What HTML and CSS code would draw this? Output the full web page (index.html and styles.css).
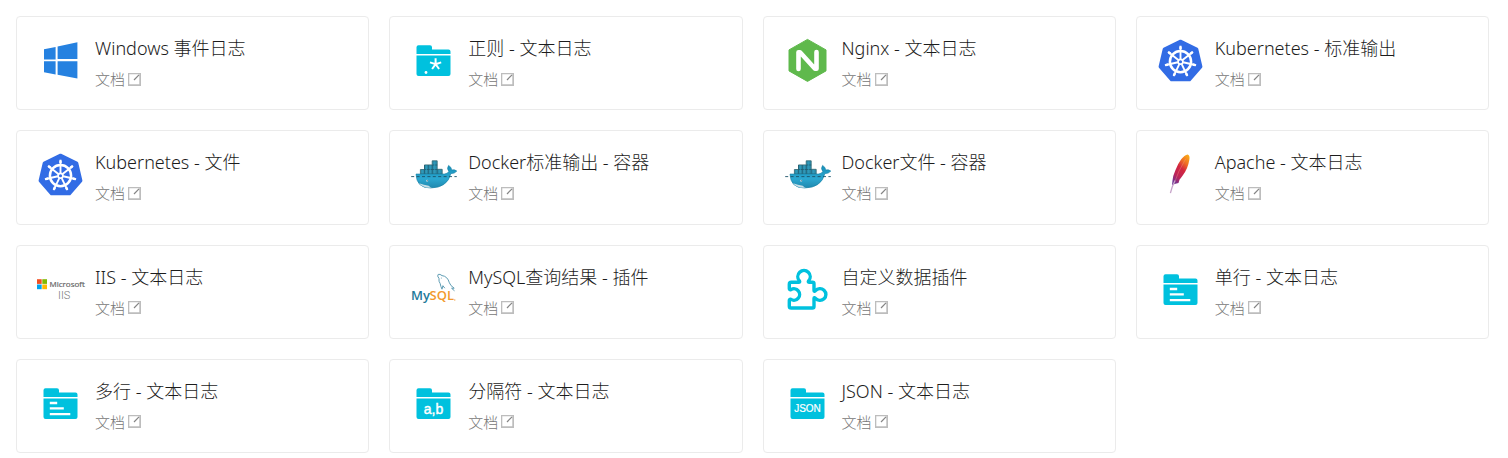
FILE: index.html
```html
<!DOCTYPE html>
<html lang="zh-CN">
<head>
<meta charset="utf-8">
<meta name="viewport" content="width=device-width, initial-scale=1">
<title>文本日志</title>
<link rel="stylesheet" href="styles.css">
</head>
<body>
<svg class="sprite" aria-hidden="true">
  <symbol id="ext" viewBox="0 0 13 13">
    <path d="M0 0H13V13H0ZM1.3 1.3V11.3H11.3V1.3Z" fill="#bdbdbd" fill-rule="evenodd"/>
    <path d="M6 7 11 1.8" fill="none" stroke="#858585" stroke-width="1.2"/>
  </symbol>
  <symbol id="folder" viewBox="0 0 48 48">
    <path fill="#00c1de" d="M6.5 17V10.3q0-2 2-2H20q2 0 2 2V12.5H38.5q2 0 2 2V17zM6.5 18.5H40.5V37q0 2-2 2H8.5q-2 0-2-2z"/>
  </symbol>
  <symbol id="folder-lines" viewBox="0 0 48 48">
    <use href="#folder"/>
    <path d="M12.8 23H20.2M12.8 28.3H26.8M12.8 34.2H33.3" stroke="#fff" stroke-width="2.3" fill="none"/>
  </symbol>
  <symbol id="k8s" viewBox="0 0 48 48">
    <path fill="#326ce5" stroke="#326ce5" stroke-width="3" stroke-linejoin="round" d="M23.5 4.2 39.8 12 43.9 29.7 32.6 42.8H14.4L3.1 29.7 7.2 12z"/>
    <g fill="none" stroke="#fff">
      <circle cx="23.5" cy="24.7" r="10.6" stroke-width="2.5"/>
      <g id="spoke" stroke-width="1.9"><path d="M23.5 22V8.7"/><path d="M23.5 12V9.5" stroke-width="2.4"/></g>
      <use href="#spoke" transform="rotate(51.43 23.5 24.7)"/>
      <use href="#spoke" transform="rotate(102.86 23.5 24.7)"/>
      <use href="#spoke" transform="rotate(154.29 23.5 24.7)"/>
      <use href="#spoke" transform="rotate(205.71 23.5 24.7)"/>
      <use href="#spoke" transform="rotate(257.14 23.5 24.7)"/>
      <use href="#spoke" transform="rotate(308.57 23.5 24.7)"/>
      <circle cx="23.5" cy="24.7" r="2.4" stroke-width="1.7"/>
    </g>
  </symbol>
  <linearGradient id="hull" x1="0" y1="0" x2="0" y2="1">
    <stop offset="0" stop-color="#178fb8"/><stop offset=".6" stop-color="#2ba7d0"/><stop offset="1" stop-color="#2088ae"/>
  </linearGradient>
  <symbol id="docker" viewBox="0 0 48 48">
    <path fill="#2a8fae" stroke="#32646f" stroke-width=".8" d="M10.4 23V18.5H14.5V13.9H22.2V9.8H27.2V18.3H32.2V23z"/>
    <path fill="none" stroke="#205c70" stroke-width=".8" d="M14.5 18.5H27M14.5 14V23M18.3 14V23M22.3 14V23M27.2 18V23M22.3 14H27.2"/>
    <path fill="none" stroke="#369fbe" stroke-width=".7" d="M12.4 19V22.5M16.4 14.5V22.5M20.3 14.5V22.5M24.7 10.5V22.5M29.7 19V22.5"/>
    <path fill="url(#hull)" stroke="#167fa4" stroke-width=".6" d="M6 23H34.4Q37.5 22.8 38.8 20.5Q36.4 17.5 38.6 14.4Q41.5 16 41.8 19Q44.4 18 46.8 20.1Q44.8 22.6 40.8 22.7Q37.5 36.8 20.5 37Q6.4 37 6 23z"/>
    <path fill="#c9dfe7" d="M9 32.2Q14 34 18.7 34.7Q20 36.2 22 36.5Q13.5 37.5 9 32.2z"/>
    <circle cx="17.2" cy="29.8" r="1" fill="#d8eff7"/><circle cx="17.3" cy="29.8" r=".5" fill="#234"/>
    <path fill="none" stroke="#1c5468" stroke-width=".9" stroke-dasharray="3 2.4" d="M1.2 25.6H46.8"/>
  </symbol>
  <linearGradient id="feather" x1=".8" y1="0" x2=".25" y2="1">
    <stop offset="0" stop-color="#f9a51a"/><stop offset=".24" stop-color="#ef6b24"/><stop offset=".46" stop-color="#d3273f"/><stop offset=".75" stop-color="#bd2458"/><stop offset="1" stop-color="#6b3395"/>
  </linearGradient>
</svg>

<main class="grid">
  <article class="card">
    <svg class="logo" viewBox="0 0 48 48" aria-hidden="true"><path fill="#2581e0" d="M7 12.2 18.6 9.9V22.4H7zM20.6 9.5 40.4 5.3V22H20.6zM7 24.3H18.6V37.4L7 35.3zM20.6 24.3H40.4V41.5L20.6 37.8z"/></svg>
    <div class="info"><h2 class="title">Windows 事件日志</h2><a class="doc" href="#">文档<svg class="ext" aria-hidden="true"><use href="#ext"/></svg></a></div>
  </article>
  <article class="card">
    <svg class="logo" viewBox="0 0 48 48" aria-hidden="true"><use href="#folder"/><path d="M25.6 21.3V27.2L20 25.4M25.6 27.2 31.2 25.4M22.1 32 25.6 27.2 29.1 32" fill="none" stroke="#fff" stroke-width="2"/><circle cx="16" cy="35.5" r="1.4" fill="#fff"/></svg>
    <div class="info"><h2 class="title">正则 - 文本日志</h2><a class="doc" href="#">文档<svg class="ext" aria-hidden="true"><use href="#ext"/></svg></a></div>
  </article>
  <article class="card">
    <svg class="logo" viewBox="0 0 48 48" aria-hidden="true"><path fill="#5fb94c" stroke="#5fb94c" stroke-linejoin="round" d="M23.5 2.4 42 12.9V33.9L23.5 44.4 5 33.9V12.9z"/><path d="M14.5 32V15.3H16L31 31.7H32.5V15" fill="none" stroke="#fff" stroke-width="4.6" stroke-linecap="round" stroke-linejoin="round"/></svg>
    <div class="info"><h2 class="title">Nginx - 文本日志</h2><a class="doc" href="#">文档<svg class="ext" aria-hidden="true"><use href="#ext"/></svg></a></div>
  </article>
  <article class="card">
    <svg class="logo" aria-hidden="true"><use href="#k8s"/></svg>
    <div class="info"><h2 class="title">Kubernetes - 标准输出</h2><a class="doc" href="#">文档<svg class="ext" aria-hidden="true"><use href="#ext"/></svg></a></div>
  </article>
  <article class="card">
    <svg class="logo" aria-hidden="true"><use href="#k8s"/></svg>
    <div class="info"><h2 class="title">Kubernetes - 文件</h2><a class="doc" href="#">文档<svg class="ext" aria-hidden="true"><use href="#ext"/></svg></a></div>
  </article>
  <article class="card">
    <svg class="logo" aria-hidden="true"><use href="#docker"/></svg>
    <div class="info"><h2 class="title">Docker标准输出 - 容器</h2><a class="doc" href="#">文档<svg class="ext" aria-hidden="true"><use href="#ext"/></svg></a></div>
  </article>
  <article class="card">
    <svg class="logo" aria-hidden="true"><use href="#docker"/></svg>
    <div class="info"><h2 class="title">Docker文件 - 容器</h2><a class="doc" href="#">文档<svg class="ext" aria-hidden="true"><use href="#ext"/></svg></a></div>
  </article>
  <article class="card">
    <svg class="logo" viewBox="0 0 48 48" aria-hidden="true"><path fill="url(#feather)" d="M30.7 3.5Q33.3 4.7 32.3 9Q31 17.5 25.7 24.5Q24 27 22.6 28.5L21.5 32 18.5 32.7 15 34 15.5 29.5Q15.8 25 18.3 19.5Q21 12.5 24.2 8.3Q27.5 4 30.7 3.5z"/><path d="M28.6 8Q21 20 17 33" stroke="#f3a18b" stroke-width=".6" opacity=".6" fill="none"/><path d="M18 29.5Q14.8 36 13.4 42.2" stroke="#c6a3c9" stroke-width="1.3" fill="none"/></svg>
    <div class="info"><h2 class="title">Apache - 文本日志</h2><a class="doc" href="#">文档<svg class="ext" aria-hidden="true"><use href="#ext"/></svg></a></div>
  </article>
  <article class="card">
    <svg class="logo" viewBox="0 0 48 48" aria-hidden="true"><path fill="#f25022" d="M0 13.2H4.7V17.9H0z"/><path fill="#7fba00" d="M5.3 13.2H10V17.9H5.3z"/><path fill="#00a4ef" d="M0 18.5H4.7V23.2H0z"/><path fill="#ffb900" d="M5.3 18.5H10V23.2H5.3z"/><text class="ms" x="12.5" y="21">Microsoft</text><text class="iis" x="21" y="33">IIS</text></svg>
    <div class="info"><h2 class="title">IIS - 文本日志</h2><a class="doc" href="#">文档<svg class="ext" aria-hidden="true"><use href="#ext"/></svg></a></div>
  </article>
  <article class="card">
    <svg class="logo" viewBox="0 0 48 48" aria-hidden="true"><path d="M32 23.2Q30.8 20.8 30.2 17.6Q28.5 15.5 29 12.5Q26.8 9.8 28.2 8.4Q30 7.8 32 9.6Q37.5 10.2 39.4 16.8Q40.3 19.7 44.2 22.2L41.6 22.3 44.5 24.8M32 23.2 32.9 19.7 34.8 22.2" fill="none" stroke="#5e9cb3" stroke-width="1" stroke-linejoin="round"/><circle cx="31.3" cy="12" r=".5" fill="#5e9cb3"/><text class="my" x="1" y="34">My</text><text class="sql" x="19.5" y="34">SQL</text><path d="M44 34H45.4" stroke="#f29111" stroke-width=".8"/></svg>
    <div class="info"><h2 class="title">MySQL查询结果 - 插件</h2><a class="doc" href="#">文档<svg class="ext" aria-hidden="true"><use href="#ext"/></svg></a></div>
  </article>
  <article class="card">
    <svg class="logo" viewBox="0 0 48 48" aria-hidden="true"><path d="M7.3 16.3H15Q16.2 16.3 15.4 14.8A6.2 6.2 0 1 1 24.6 14.8Q23.8 16.3 25 16.3H28.5Q30 16.3 30 17.8V24.2Q30 26 31.4 24.8A5.9 5.9 0 1 1 31.4 32.2Q30 31 30 32.5V40.4Q30 42 28.4 42H7.2Q5.3 42 5.3 40.2V34.4Q5.3 32.8 7 33.4A5.7 5.7 0 1 0 7 23.6Q5.3 24.2 5.3 22.6V18.3Q5.3 16.3 7.3 16.3z" fill="none" stroke="#00c1de" stroke-width="3.4" stroke-linejoin="round"/></svg>
    <div class="info"><h2 class="title">自定义数据插件</h2><a class="doc" href="#">文档<svg class="ext" aria-hidden="true"><use href="#ext"/></svg></a></div>
  </article>
  <article class="card">
    <svg class="logo" aria-hidden="true"><use href="#folder-lines"/></svg>
    <div class="info"><h2 class="title">单行 - 文本日志</h2><a class="doc" href="#">文档<svg class="ext" aria-hidden="true"><use href="#ext"/></svg></a></div>
  </article>
  <article class="card">
    <svg class="logo" aria-hidden="true"><use href="#folder-lines"/></svg>
    <div class="info"><h2 class="title">多行 - 文本日志</h2><a class="doc" href="#">文档<svg class="ext" aria-hidden="true"><use href="#ext"/></svg></a></div>
  </article>
  <article class="card">
    <svg class="logo" viewBox="0 0 48 48" aria-hidden="true"><use href="#folder"/><text class="tag tag-ab" x="23.5" y="33.5">a,b</text></svg>
    <div class="info"><h2 class="title">分隔符 - 文本日志</h2><a class="doc" href="#">文档<svg class="ext" aria-hidden="true"><use href="#ext"/></svg></a></div>
  </article>
  <article class="card">
    <svg class="logo" viewBox="0 0 48 48" aria-hidden="true"><use href="#folder"/><text class="tag tag-json" x="23.5" y="32.3">JSON</text></svg>
    <div class="info"><h2 class="title">JSON - 文本日志</h2><a class="doc" href="#">文档<svg class="ext" aria-hidden="true"><use href="#ext"/></svg></a></div>
  </article>
</main>
</body>
</html>
```
FILE: styles.css
```css
* {
  box-sizing: border-box;
}

body {
  margin: 0;
  background: #fff;
  color: #1c1c1c;
  font-family: "Noto Sans", "Noto Sans CJK SC", sans-serif;
  font-weight: 300;
}

.sprite {
  position: absolute;
  width: 0;
  height: 0;
}

.grid {
  display: grid;
  grid-template-columns: repeat(4, minmax(0, 1fr));
  grid-auto-rows: 1fr;
  gap: 20px;
  min-height: 100vh;
  padding: 16px 19px 5px 16px;
}

.card {
  display: flex;
  align-items: flex-start;
  gap: 10px;
  padding: 20px;
  border: 1px solid #ebebeb;
  border-radius: 4px;
}

.logo {
  flex: none;
  width: 48px;
  height: 48px;
  overflow: visible;
}

.info {
  display: flex;
  flex-direction: column;
  align-items: flex-start;
  gap: 10px;
  min-width: 0;
}

.title {
  margin: 0;
  font-size: 18px;
  font-weight: 300;
  line-height: 22px;
  white-space: nowrap;
}

.doc {
  display: flex;
  align-items: center;
  gap: 3px;
  color: #777;
  font-size: 15px;
  line-height: 20px;
  text-decoration: none;
}

.ext {
  width: 13px;
  height: 13px;
}

.ms {
  fill: #666;
  font: 400 8px "Open Sans", sans-serif;
  stroke: #666;
  stroke-width: 0.2px;
}

.iis {
  fill: #777;
  font: 300 11px Roboto, sans-serif;
}

.my,
.sql {
  fill: #1f7a9a;
  font: 600 13px "Open Sans", sans-serif;
}

.sql {
  fill: #f29a2e;
}

.tag {
  fill: #fff;
  font-family: "Liberation Sans", sans-serif;
  font-weight: 400;
  text-anchor: middle;
  stroke: #fff;
}

.tag-ab {
  font-size: 14px;
  stroke-width: 0.4px;
}

.tag-json {
  font-size: 10px;
  stroke-width: 0.2px;
}
```
